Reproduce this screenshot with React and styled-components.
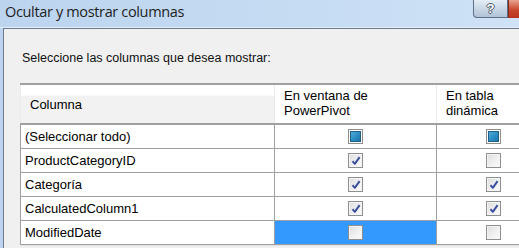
import React from "react";
import styled, { createGlobalStyle } from "styled-components";

const rows = [
  { name: "(Seleccionar todo)", pivot: "mixed", table: "mixed" },
  { name: "ProductCategoryID", pivot: "checked", table: "off" },
  { name: "Categoría", pivot: "checked", table: "checked" },
  { name: "CalculatedColumn1", pivot: "checked", table: "checked" },
  { name: "ModifiedDate", pivot: "off", table: "off", selected: true },
];

const App = () => {
  return (
    <>
      <GlobalStyle />
      <Window>
        <TitleBar>
          <Title>Ocultar y mostrar columnas</Title>
          <Controls>
            <HelpButton>?</HelpButton>
            <CloseButton />
          </Controls>
        </TitleBar>
        <Frame>
          <Body>
            <Prompt>Seleccione las columnas que desea mostrar:</Prompt>
            <Grid>
              <colgroup>
                <col style={{ width: 254 }} />
                <col style={{ width: 162 }} />
                <col style={{ width: 114 }} />
              </colgroup>
              <thead>
                <tr>
                  <HeadCell $first>Columna</HeadCell>
                  <HeadCell>
                    En ventana de
                    <br />
                    PowerPivot
                  </HeadCell>
                  <HeadCell>
                    En tabla
                    <br />
                    dinámica
                  </HeadCell>
                </tr>
              </thead>
              <tbody>
                {rows.map((row) => (
                  <tr key={row.name}>
                    <NameCell>{row.name}</NameCell>
                    <BoxCell $selected={row.selected}>
                      <CheckBox state={row.pivot} />
                    </BoxCell>
                    <BoxCell>
                      <CheckBox state={row.table} />
                    </BoxCell>
                  </tr>
                ))}
              </tbody>
            </Grid>
            <ScrollStrip />
          </Body>
        </Frame>
      </Window>
    </>
  );
};

const CheckBox = ({ state }) => (
  <Box $state={state}>
    {state === "checked" && (
      <svg width="10" height="10" viewBox="0 0 10 10">
        <path
          d="M1.5 5.2 L3.8 7.8 L8.6 1.2"
          fill="none"
          stroke="#3a4e9e"
          strokeWidth="2"
          strokeLinejoin="round"
        />
      </svg>
    )}
  </Box>
);

// Styled Components
const GlobalStyle = createGlobalStyle`
  html, body {
    margin: 0;
    padding: 0;
    background: #f0f0f0;
  }
`;

const Window = styled.div`
  width: 519px;
  height: 248px;
  display: flex;
  flex-direction: column;
  overflow: hidden;
  background: linear-gradient(90deg, #bcd4ee 0%, #c6dcf3 60%, #cfe2f6 100%);
`;

const TitleBar = styled.div`
  height: 28px;
  flex-shrink: 0;
  display: flex;
  align-items: flex-start;
  justify-content: space-between;
  padding-left: 5px;
  box-sizing: border-box;
  border-bottom: 1px solid #e4eef9;
`;

const Title = styled.div`
  font-family: "Open Sans", "Noto Sans", sans-serif;
  font-size: 14.5px;
  letter-spacing: -0.35px;
  color: #1e1e1e;
  line-height: 24px;
`;

const Controls = styled.div`
  display: flex;
`;

const HelpButton = styled.div`
  width: 35px;
  height: 18px;
  box-sizing: border-box;
  border: 1px solid #5d6f86;
  border-top: none;
  border-radius: 0 0 0 4px;
  background: linear-gradient(180deg, #e6eef7 0%, #cad7e6 50%, #b2c3d8 100%);
  font-family: "Liberation Sans", sans-serif;
  font-weight: bold;
  font-size: 13px;
  line-height: 17px;
  text-align: center;
  color: #ffffff;
  text-shadow: 1px 0 #4c5a6c, -1px 0 #4c5a6c, 0 1px #4c5a6c, 0 -1px #4c5a6c;
`;

const CloseButton = styled.div`
  width: 10px;
  height: 18px;
  background: linear-gradient(180deg, #e9a38f 0%, #c9472e 55%, #b8331d 100%);
  border-left: 1px solid #7d2a1a;
`;

const Frame = styled.div`
  flex: 1;
  padding-left: 3px;
  display: flex;
  min-height: 0;
`;

const Body = styled.div`
  flex: 1;
  display: flex;
  flex-direction: column;
  background: #f0f0f0;
  border-left: 1px solid #6c7b8c;
  border-top: 1px solid #6c7b8c;
  padding: 22px 0 0 16px;
  min-width: 0;
  overflow: hidden;
`;

const Prompt = styled.div`
  flex-shrink: 0;
  font-family: "Liberation Sans", Arial, sans-serif;
  font-size: 12.5px;
  color: #111;
  padding-left: 2px;
  height: 32px;
`;

const Grid = styled.table`
  border-collapse: collapse;
  table-layout: fixed;
  width: 530px;
  flex-shrink: 0;
  background: #ffffff;
  font-family: "Liberation Sans", Arial, sans-serif;
  font-size: 13px;
  color: #000;
  border-top: 2px solid #a0a0a0;
  border-left: 1px solid #a0a0a0;

  td, th {
    padding: 0;
  }
`;

const HeadCell = styled.th`
  height: 35px;
  font-weight: normal;
  text-align: left;
  vertical-align: ${(p) => (p.$first ? "middle" : "top")};
  padding: ${(p) => (p.$first ? "0 0 0 9px" : "3px 0 0 9px")} !important;
  line-height: 15px;
  border-left: 1px solid #ececec;
  border-bottom: 2px solid #a0a0a0;
  background: ${(p) =>
    p.$first
      ? "linear-gradient(180deg, #ffffff 0%, #ffffff 26%, #f2f2f2 30%, #f2f2f2 100%)"
      : "#ffffff"};
`;

const NameCell = styled.td`
  height: 23px;
  padding-left: 4px !important;
  border-bottom: 1px solid #a0a0a0;
  border-right: 1px solid #a0a0a0;
  white-space: nowrap;
`;

const BoxCell = styled.td`
  height: 23px;
  text-align: center;
  vertical-align: middle;
  border-bottom: 1px solid #a0a0a0;
  border-right: 1px solid #a0a0a0;
  background: ${(p) => (p.$selected ? "#3399ff" : "#ffffff")};
  line-height: 0;
`;

const Box = styled.span`
  display: inline-flex;
  align-items: center;
  justify-content: center;
  width: 15px;
  height: 15px;
  box-sizing: border-box;
  border: 1px solid #8e8f8f;
  box-shadow: inset 0 0 0 1px #f4f4f4;
  background: ${(p) =>
    p.$state === "mixed"
      ? "linear-gradient(135deg, #5fb6df 0%, #2a8cc4 55%, #1c6795 100%)"
      : "linear-gradient(135deg, #dcdcdc 0%, #f2f2f2 60%, #fafafa 100%)"};
  ${(p) =>
    p.$state === "mixed" &&
    "box-shadow: inset 0 0 0 1px #ffffff, inset 0 0 0 2px #1f5f8a;"}
`;

const ScrollStrip = styled.div`
  height: 4px;
  flex-shrink: 0;
  background: #f0f0f0;
  border-top: 1px solid #e2e2e2;
`;

export default App;
